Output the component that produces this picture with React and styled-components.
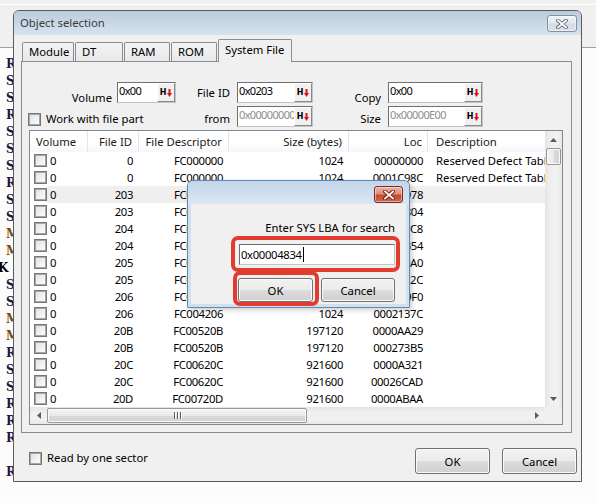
import React from "react";
import styled, { createGlobalStyle } from "styled-components";

const GlobalStyle = createGlobalStyle`
  html, body { margin: 0; padding: 0; background: #fcfcfc; }
  body {
    font-family: "Noto Sans", "DejaVu Sans", sans-serif;
    font-size: 11.3px;
    color: #000;
  }
  * { box-sizing: border-box; }
`;

/* ---------- desktop behind the windows ---------- */
const Desktop = styled.div`
  position: relative;
  width: 596px;
  height: 503px;
  overflow: hidden;
  background: #fcfcfc;
`;
const DesktopBar = styled.div`
  height: 48px;
  background: linear-gradient(#f0f0f0 0 4px, #ffffff 4px 5px, #f0f0f0 5px);
  border-bottom: 1px solid #a0a0a0;
`;
const DesktopText = styled.div`
  padding-top: 8px;
  margin-left: -2px;
  font-family: "DejaVu Serif", "Liberation Serif", serif;
  font-weight: 700;
  font-size: 12px;
  line-height: 17px;
  white-space: pre;
`;
const DeskLine = styled.div`
  height: 17px;
  padding-left: ${(p) => (p.$indent ? 8 : 0)}px;
  color: ${(p) => (p.$tone === "M" ? "#7a4510" : p.$tone === "K" ? "#000" : "#17174a")};
`;

/* ---------- generic win7 window parts ---------- */
const Window = styled.div`
  position: absolute;
  left: 13px;
  top: 10px;
  width: 569px;
  height: 472px;
  border: 1px solid #5b5b5b;
  border-radius: 6px 6px 0 0;
  background: #f0f0f0;
  display: flex;
  flex-direction: column;
  z-index: 1;
`;
const TitleBar = styled.div`
  height: 24px;
  flex: none;
  display: flex;
  align-items: flex-start;
  padding: 4px 4px 0 6px;
  background: linear-gradient(#bccbdc, #d7e3ef);
  border-radius: 5px 5px 0 0;
`;
const Title = styled.span`
  flex: 1;
  color: #3a3a3a;
  line-height: 16px;
`;
const CloseBox = styled.span`
  width: ${(p) => p.$w}px;
  height: 17px;
  flex: none;
  display: flex;
  align-items: center;
  justify-content: center;
  border-radius: 3px;
  border: 1px solid ${(p) => (p.$red ? "#7e2a1c" : "#8390a0")};
  background: ${(p) =>
    p.$red
      ? "linear-gradient(#eab1a5 0%, #de8f7d 45%, #c9482f 55%, #d0654c 100%)"
      : "linear-gradient(#f1f4f7 0%, #e2e8ef 45%, #d2dae4 55%, #dbe2ea 100%)"};
  box-shadow: inset 0 0 0 1px rgba(255, 255, 255, 0.45);
`;
const WindowBody = styled.div`
  flex: 1;
  display: flex;
  flex-direction: column;
  padding: 4px 4px 7px 7px;
`;

/* ---------- tabs ---------- */
const TabStrip = styled.div`
  height: 23px;
  flex: none;
  display: flex;
  align-items: flex-end;
  gap: 1px;
  padding-left: 1px;
  margin-bottom: -1px;
  position: relative;
  z-index: 1;
`;
const Tab = styled.div`
  width: ${(p) => p.$w}px;
  height: ${(p) => (p.$active ? 23 : 19)}px;
  margin-bottom: ${(p) => (p.$active ? 0 : 1)}px;
  padding: ${(p) => (p.$active ? 2 : 1)}px 0 0 6px;
  line-height: 16px;
  border: 1px solid #898c95;
  border-bottom: none;
  border-radius: 2px 2px 0 0;
  background: ${(p) => (p.$active ? "#f0f0f0" : "linear-gradient(#f4f4f4, #e9e9e9)")};
  white-space: nowrap;
`;
const TabPanel = styled.div`
  flex: none;
  margin-right: 5px;
  border: 1px solid #898c95;
  background: #f0f0f0;
  padding: 20px 8px 7px 7px;
`;

/* ---------- fields ---------- */
const FieldsGrid = styled.div`
  display: grid;
  grid-template-columns: 88px 59px 61px 76px 75px 95px;
  grid-template-rows: 21px 21px;
  row-gap: 3px;
  margin-bottom: 3px;
`;
const FieldLabel = styled.span`
  justify-self: end;
  align-self: ${(p) => (p.$low ? "end" : "center")};
  margin-bottom: ${(p) => p.$drop || 0}px;
  padding-right: ${(p) => p.$gap}px;
  line-height: 16px;
  white-space: nowrap;
`;
const HexField = styled.div`
  display: flex;
  height: 21px;
  background: #fff;
  border: 1px solid;
  border-color: #6f6f6f #c4c4c4 #c4c4c4 #6f6f6f;
`;
const HexValue = styled.span`
  flex: 1;
  min-width: 0;
  padding-left: 1px;
  font-size: 11px;
  line-height: 16px;
  letter-spacing: -0.65px;
  overflow: hidden;
  white-space: nowrap;
  color: ${(p) => (p.$disabled ? "#8d8d8d" : "#000")};
`;
const HexButton = styled.span`
  width: 18px;
  flex: none;
  display: flex;
  align-items: center;
  justify-content: center;
  gap: 1px;
  background: #f0f0f0;
  border: 1px solid;
  border-color: #ffffff #8a8a8a #8a8a8a #ffffff;
`;
const HexGlyph = styled.span`
  font-family: "DejaVu Sans", sans-serif;
  font-weight: 700;
  font-size: 8px;
  line-height: 8px;
`;
const CheckRow = styled.label`
  grid-column: span 2;
  align-self: end;
  display: flex;
  align-items: center;
  gap: 5px;
  margin-left: ${(p) => p.$shift || 0}px;
  line-height: 16px;
  white-space: nowrap;
`;
const CheckBox = styled.span`
  width: 13px;
  height: 13px;
  flex: none;
  border: 1px solid #767676;
  box-shadow: inset 0 0 0 1px #a6a6a6;
  background: linear-gradient(135deg, #e0e0e0, #ffffff);
`;

/* ---------- list view ---------- */
const ListView = styled.div`
  width: 534px;
  height: 295px;
  border: 1px solid #828790;
  background: #fff;
  display: grid;
  grid-template-columns: 515px 17px;
  grid-template-rows: 276px 17px;
`;
const ListContent = styled.div`
  overflow: hidden;
`;
const COLS = "58px 51px 90px 120px 79px 140px";
const HeaderRow = styled.div`
  display: grid;
  grid-template-columns: ${COLS};
  height: 21px;
  background: linear-gradient(#ffffff 0%, #ffffff 55%, #f6f7f9 100%);
`;
const HeaderCell = styled.div`
  display: flex;
  align-items: center;
  justify-content: ${(p) => (p.$right ? "flex-end" : "flex-start")};
  padding: ${(p) => (p.$right ? `0 ${p.$pad ?? 6}px 0 0` : `0 0 0 ${p.$pad ?? 6}px`)};
  border-right: 1px solid #e3e5e9;
  color: #1b1b1b;
  white-space: nowrap;
  overflow: hidden;
`;
const DataRow = styled.div`
  display: grid;
  grid-template-columns: ${COLS};
  height: 17px;
  line-height: 17px;
`;
const Cell = styled.div`
  padding: ${(p) => (p.$right ? `0 ${p.$pad ?? 6}px 0 0` : `0 0 0 ${p.$pad ?? 6}px`)};
  text-align: ${(p) => (p.$right ? "right" : "left")};
  letter-spacing: ${(p) => (p.$right ? "-0.35px" : "0")};
  background: ${(p) => (p.$hl ? "#efefef" : "transparent")};
  white-space: nowrap;
  overflow: hidden;
`;
const VolumeCell = styled.div`
  display: flex;
  align-items: center;
  padding-left: 4px;
`;
const VolumeText = styled.span`
  flex: 1;
  align-self: stretch;
  padding-left: 3px;
  background: ${(p) => (p.$hl ? "#efefef" : "transparent")};
`;
const VScroll = styled.div`
  display: flex;
  flex-direction: column;
  background: linear-gradient(to right, #e4e4e4, #efefef 30%, #f2f2f2 70%, #e8e8e8);
`;
const HScroll = styled.div`
  display: flex;
  background: linear-gradient(#e4e4e4, #efefef 30%, #f2f2f2 70%, #e8e8e8);
`;
const ScrollArrow = styled.span`
  width: 17px;
  height: 17px;
  flex: none;
  display: flex;
  align-items: center;
  justify-content: center;
`;
const Spacer = styled.span`
  flex: 1;
`;
const Thumb = styled.span`
  flex: none;
  width: ${(p) => (p.$vertical ? "auto" : `${p.$len}px`)};
  height: ${(p) => (p.$vertical ? `${p.$len}px` : "auto")};
  margin: ${(p) => (p.$vertical ? "0 1px" : "1px 0")};
  display: flex;
  align-items: center;
  justify-content: center;
  gap: 2px;
  border: 1px solid #979797;
  border-radius: 2px;
  background: ${(p) =>
    p.$vertical
      ? "linear-gradient(to right, #f4f4f4, #e9e9e9 50%, #dadada 51%, #d2d2d2)"
      : "linear-gradient(#f4f4f4, #e9e9e9 50%, #dadada 51%, #d2d2d2)"};
  box-shadow: inset 0 0 0 1px #fafafa;
`;
const Grip = styled.span`
  width: 1px;
  height: 7px;
  background: #5c5c5c;
  box-shadow: 1px 0 0 #ffffff;
`;
const Corner = styled.div`
  background: #f0f0f0;
`;

/* ---------- bottom row ---------- */
const BottomRow = styled.div`
  flex: 1;
  display: flex;
  align-items: flex-end;
`;
const BottomCheck = styled.label`
  display: flex;
  align-items: center;
  gap: 5px;
  margin: 0 0 8px 8px;
  line-height: 16px;
`;
const PushButton = styled.button`
  width: ${(p) => p.$w}px;
  height: ${(p) => p.$h}px;
  margin-left: ${(p) => p.$ml || 0}px;
  flex: none;
  padding: 0;
  font: inherit;
  color: #000;
  border: 1px solid #707070;
  border-radius: 3px;
  background: linear-gradient(#f2f2f2 0%, #ebebeb 49%, #dddddd 51%, #cfcfcf 100%);
  box-shadow: inset 0 0 0 1px #fbfbfb;
`;

/* ---------- search prompt ---------- */
const Prompt = styled.div`
  position: absolute;
  left: 187px;
  top: 180px;
  width: 223px;
  height: 128px;
  z-index: 2;
  display: flex;
  flex-direction: column;
  border: 1px solid #5f88b2;
  border-radius: 6px 6px 0 0;
  background: #d2e0ee;
  box-shadow: 2px 2px 5px rgba(0, 0, 0, 0.2);
`;
const PromptTitle = styled.div`
  height: 23px;
  flex: none;
  display: flex;
  justify-content: flex-end;
  padding: 5px 6px 0 0;
  border-radius: 5px 5px 0 0;
  background: linear-gradient(#c3d5e9, #dbe7f3);
`;
const PromptBody = styled.div`
  flex: 1;
  margin: 0 3px 3px;
  display: flex;
  flex-direction: column;
  align-items: flex-end;
  padding: 16px 11px 0 0;
  background: #f0f0f0;
`;
const PromptText = styled.div`
  line-height: 16px;
  white-space: nowrap;
`;
const PromptInput = styled.div`
  width: 156px;
  height: 21px;
  margin-top: 8px;
  display: flex;
  align-items: center;
  padding-left: 1px;
  letter-spacing: -0.35px;
  background: #fff;
  border: 1px solid;
  border-color: #6f6f6f #c4c4c4 #c4c4c4 #6f6f6f;
`;
const Caret = styled.span`
  width: 1px;
  height: 15px;
  margin-left: 1px;
  background: #000;
`;
const PromptButtons = styled.div`
  display: flex;
  gap: 8px;
  margin-top: 13px;
`;
const Highlight = styled.span`
  position: absolute;
  left: ${(p) => p.$x}px;
  top: ${(p) => p.$y}px;
  width: ${(p) => p.$w}px;
  height: ${(p) => p.$h}px;
  border: 4px solid #e23b2f;
  border-radius: 7px;
  pointer-events: none;
`;

/* ---------- icons ---------- */
const CloseX = ({ red }) => (
  <svg width="12" height="10" viewBox="0 0 12 10">
    <path d="M2 1.5 L10 8.5 M10 1.5 L2 8.5" stroke={red ? "#6b1b10" : "#5e6b7a"} strokeWidth="3.6" strokeLinecap="square" />
    <path d="M2 1.5 L10 8.5 M10 1.5 L2 8.5" stroke="#ffffff" strokeWidth="1.8" strokeLinecap="square" />
  </svg>
);
const RedDown = () => (
  <svg width="5" height="8" viewBox="0 0 5 8">
    <rect x="1.5" y="0" width="2" height="4" fill="#e01010" />
    <polygon points="0,4 5,4 2.5,8" fill="#e01010" />
  </svg>
);
const Tri = ({ dir }) => {
  const pts = {
    up: "0,4 7,4 3.5,0",
    down: "0,0 7,0 3.5,4",
    left: "4,0 4,7 0,3.5",
    right: "0,0 0,7 4,3.5",
  }[dir];
  const vertical = dir === "up" || dir === "down";
  return (
    <svg width={vertical ? 7 : 4} height={vertical ? 4 : 7} viewBox={vertical ? "0 0 7 4" : "0 0 4 7"}>
      <polygon points={pts} fill="#5a5a5a" />
    </svg>
  );
};

const HexInput = ({ value, disabled }) => (
  <HexField>
    <HexValue $disabled={disabled}>{value}</HexValue>
    <HexButton>
      <HexGlyph>H</HexGlyph>
      <RedDown />
    </HexButton>
  </HexField>
);

/* ---------- data ---------- */
const deskLines = [
  "R", "S", "S", "R", "S", "S", "S", "R", "S", "S", "M", "M", "K",
  "S", "S", "M", "M", "R", "S", "S", "R", "R", "R", "", "R",
];

const rows = [
  { id: "0", fd: "FC000000", size: "1024", loc: "00000000", desc: "Reserved Defect Table" },
  { id: "0", fd: "FC000000", size: "1024", loc: "0001C98C", desc: "Reserved Defect Table" },
  { id: "203", fd: "FC001203", size: "1024", loc: "0001F978", hl: true },
  { id: "203", fd: "FC001203", size: "1024", loc: "00004804" },
  { id: "204", fd: "FC002204", size: "1024", loc: "0001DDC8" },
  { id: "204", fd: "FC002204", size: "1024", loc: "00004354" },
  { id: "205", fd: "FC003205", size: "1024", loc: "0001E0A0" },
  { id: "205", fd: "FC003205", size: "1024", loc: "0000482C" },
  { id: "206", fd: "FC004206", size: "1024", loc: "0001D9F0" },
  { id: "206", fd: "FC004206", size: "1024", loc: "0002137C" },
  { id: "20B", fd: "FC00520B", size: "197120", loc: "0000AA29" },
  { id: "20B", fd: "FC00520B", size: "197120", loc: "000273B5" },
  { id: "20C", fd: "FC00620C", size: "921600", loc: "0000A321" },
  { id: "20C", fd: "FC00620C", size: "921600", loc: "00026CAD" },
  { id: "20D", fd: "FC00720D", size: "921600", loc: "0000ABAA" },
];

const tabs = [
  { label: "Module", w: 52 },
  { label: "DT", w: 48 },
  { label: "RAM", w: 46 },
  { label: "ROM", w: 46 },
  { label: "System File", w: 74, active: true },
];

export default function App() {
  return (
    <>
      <GlobalStyle />
      <Desktop>
        <DesktopBar />
        <DesktopText>
          {deskLines.map((l, i) => (
            <DeskLine key={i} $indent={l !== "K"} $tone={l}>
              {l}
            </DeskLine>
          ))}
        </DesktopText>

        <Window>
          <TitleBar>
            <Title>Object selection</Title>
            <CloseBox $w={30}>
              <CloseX />
            </CloseBox>
          </TitleBar>
          <WindowBody>
            <TabStrip>
              {tabs.map((t) => (
                <Tab key={t.label} $w={t.w} $active={t.active}>
                  {t.label}
                </Tab>
              ))}
            </TabStrip>
            <TabPanel>
              <FieldsGrid>
                <FieldLabel $low $drop={-3} $gap={5}>Volume</FieldLabel>
                <HexInput value="0x00" />
                <FieldLabel $gap={7}>File ID</FieldLabel>
                <HexInput value="0x0203" />
                <FieldLabel $low $drop={-3} $gap={7}>Copy</FieldLabel>
                <HexInput value="0x00" />

                <CheckRow $shift={-1}>
                  <CheckBox />
                  Work with file part
                </CheckRow>
                <FieldLabel $low $gap={7}>from</FieldLabel>
                <HexInput value="0x00000000" disabled />
                <FieldLabel $low $gap={7}>Size</FieldLabel>
                <HexInput value="0x00000E00" disabled />
              </FieldsGrid>

              <ListView>
                <ListContent>
                  <HeaderRow>
                    <HeaderCell>Volume</HeaderCell>
                    <HeaderCell $right>File ID</HeaderCell>
                    <HeaderCell $right>File Descriptor</HeaderCell>
                    <HeaderCell $right>Size (bytes)</HeaderCell>
                    <HeaderCell $right $pad={5}>Loc</HeaderCell>
                    <HeaderCell $pad={8}>Description</HeaderCell>
                  </HeaderRow>
                  {rows.map((r, i) => (
                    <DataRow key={i}>
                      <VolumeCell>
                        <CheckBox />
                        <VolumeText $hl={r.hl}>0</VolumeText>
                      </VolumeCell>
                      <Cell $right $hl={r.hl}>{r.id}</Cell>
                      <Cell $right $hl={r.hl}>{r.fd}</Cell>
                      <Cell $right $hl={r.hl}>{r.size}</Cell>
                      <Cell $right $pad={5} $hl={r.hl}>{r.loc}</Cell>
                      <Cell $pad={8} $hl={r.hl}>{r.desc || ""}</Cell>
                    </DataRow>
                  ))}
                </ListContent>
                <VScroll>
                  <ScrollArrow><Tri dir="up" /></ScrollArrow>
                  <Thumb $vertical $len={17} />
                  <Spacer />
                  <ScrollArrow><Tri dir="down" /></ScrollArrow>
                </VScroll>
                <HScroll>
                  <ScrollArrow><Tri dir="left" /></ScrollArrow>
                  <Thumb $len={260}>
                    <Grip />
                    <Grip />
                    <Grip />
                  </Thumb>
                  <Spacer />
                  <ScrollArrow><Tri dir="right" /></ScrollArrow>
                </HScroll>
                <Corner />
              </ListView>
            </TabPanel>

            <BottomRow>
              <BottomCheck>
                <CheckBox />
                Read by one sector
              </BottomCheck>
              <Spacer />
              <PushButton $w={75} $h={26}>OK</PushButton>
              <PushButton $w={75} $h={26} $ml={12}>Cancel</PushButton>
            </BottomRow>
          </WindowBody>
        </Window>

        <Prompt>
          <PromptTitle>
            <CloseBox $w={29} $red>
              <CloseX red />
            </CloseBox>
          </PromptTitle>
          <PromptBody>
            <PromptText>Enter SYS LBA for search</PromptText>
            <PromptInput>
              0x00004834
              <Caret />
            </PromptInput>
            <PromptButtons>
              <PushButton $w={75} $h={24}>OK</PushButton>
              <PushButton $w={74} $h={24}>Cancel</PushButton>
            </PromptButtons>
          </PromptBody>
          <Highlight $x={43} $y={55} $w={169} $h={36} />
          <Highlight $x={45} $y={90} $w={86} $h={35} />
        </Prompt>
      </Desktop>
    </>
  );
}
